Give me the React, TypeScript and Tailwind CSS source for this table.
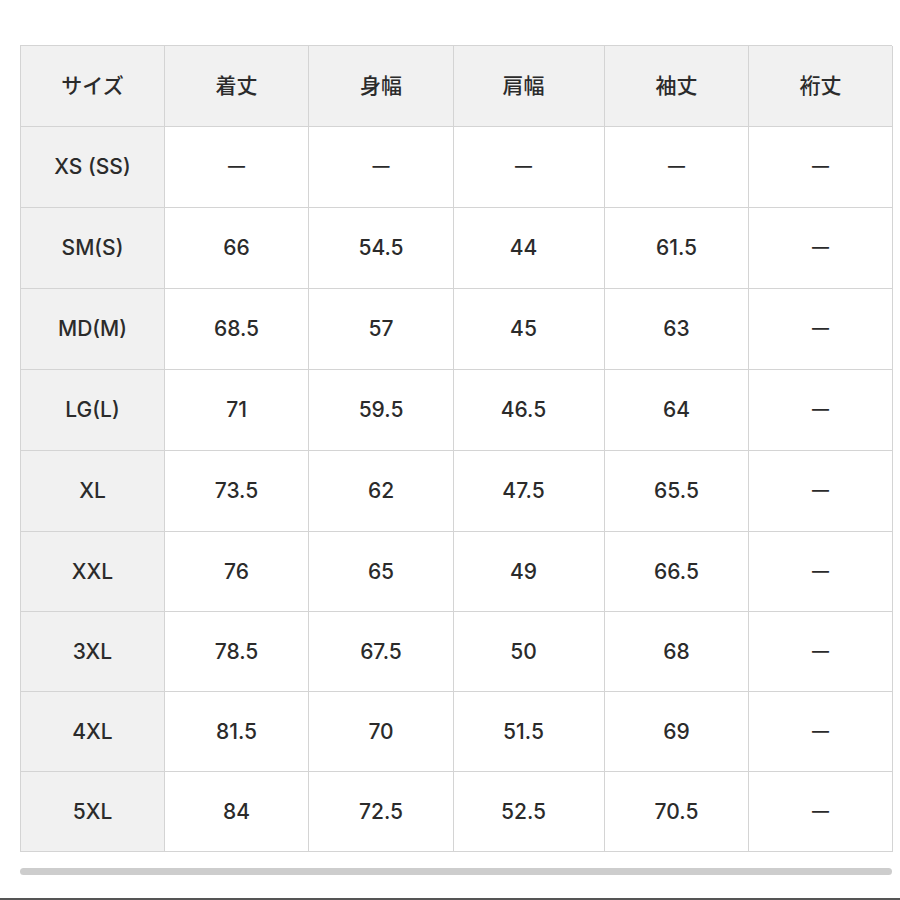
const headers = ["サイズ", "着丈", "身幅", "肩幅", "袖丈", "裄丈"];

const rows: string[][] = [
  ["XS (SS)", "—", "—", "—", "—", "—"],
  ["SM(S)", "66", "54.5", "44", "61.5", "—"],
  ["MD(M)", "68.5", "57", "45", "63", "—"],
  ["LG(L)", "71", "59.5", "46.5", "64", "—"],
  ["XL", "73.5", "62", "47.5", "65.5", "—"],
  ["XXL", "76", "65", "49", "66.5", "—"],
  ["3XL", "78.5", "67.5", "50", "68", "—"],
  ["4XL", "81.5", "70", "51.5", "69", "—"],
  ["5XL", "84", "72.5", "52.5", "70.5", "—"],
];

const fontStack = { fontFamily: '"Inter", "Noto Sans CJK JP", sans-serif' };

function Cell({
  text,
  shaded,
  tall,
  wide,
}: {
  text: string;
  shaded: boolean;
  tall: boolean;
  wide: boolean;
}) {
  const isDash = text === "—";
  return (
    <div
      className={`flex items-center justify-center border-r border-b border-[#d4d4d4] text-[#2b2b2b] ${
        isDash ? "text-[17px] font-semibold" : "text-[21px] font-medium"
      } ${shaded ? "bg-[#f1f1f1]" : "bg-white"} ${tall ? "h-[81px]" : "h-[80px]"} ${
        wide ? "pr-[11px]" : ""
      }`}
    >
      {text}
    </div>
  );
}

export default function App() {
  return (
    <div className="flex h-[900px] w-[900px] flex-col bg-white" style={fontStack}>
      <div className="pl-[20px] pt-[45px]">
        <div className="grid w-[872px] grid-cols-[144px_144px_145px_151px_144px_144px] border-t border-l border-[#d4d4d4]">
          {headers.map((h, j) => (
            <Cell key={h} text={h} shaded tall wide={j === 3} />
          ))}
          {rows.map((row, i) =>
            row.map((value, j) => (
              <Cell
                key={`${i}-${j}`}
                text={value}
                shaded={j === 0}
                tall={i < 5}
                wide={j === 3}
              />
            ))
          )}
        </div>
        <div className="mt-[16px] h-[7px] w-[872px] rounded-full bg-[#cdcdcd]" />
      </div>
      <div className="mt-auto h-[2px] w-full bg-[#555555]" />
    </div>
  );
}
